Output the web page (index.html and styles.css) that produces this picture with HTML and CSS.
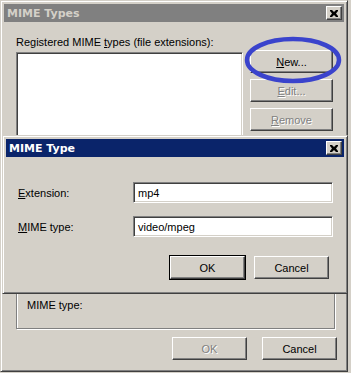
FILE: index.html
```html
<!DOCTYPE html>
<html lang="en">
<head>
    <meta charset="UTF-8">
    <title>MIME Types</title>
    <link rel="stylesheet" href="styles.css">
</head>
<body>
    <div class="window">
        <div class="titlebar inactive">
            <span class="title">MIME Types</span>
            <button class="close" aria-label="Close">
                <svg width="8" height="7" viewBox="0 0 8 7"><path d="M0 0h2l2 2 2-2h2v1L6 3.5 8 6v1H6L4 5 2 7H0V6l2-2.5L0 1z" fill="#000"/></svg>
            </button>
        </div>
        <div class="client">
            <div class="label">Registered MIME <u>t</u>ypes (file extensions):</div>
            <div class="list-row">
                <div class="listbox"></div>
                <div class="side-buttons">
                    <button class="btn"><u>N</u>ew...</button>
                    <button class="btn disabled"><u>E</u>dit...</button>
                    <button class="btn disabled"><u>R</u>emove</button>
                </div>
            </div>
            <div class="groupbox">
                <div class="group-label">MIME type:</div>
            </div>
            <div class="footer">
                <button class="btn wide disabled">OK</button>
                <button class="btn wide">Cancel</button>
            </div>
        </div>

        <!-- anotacao em volta do botao New -->
        <svg class="circle" width="100" height="50" viewBox="0 0 100 50">
            <ellipse cx="50" cy="24" rx="46" ry="21" fill="none" stroke="#3a43cc" stroke-width="4.5"/>
        </svg>
    </div>

    <div class="dialog">
        <div class="titlebar active">
            <span class="title">MIME Type</span>
            <button class="close" aria-label="Close">
                <svg width="8" height="7" viewBox="0 0 8 7"><path d="M0 0h2l2 2 2-2h2v1L6 3.5 8 6v1H6L4 5 2 7H0V6l2-2.5L0 1z" fill="#000"/></svg>
            </button>
        </div>
        <div class="dialog-client">
            <div class="field">
                <label class="field-label"><u>E</u>xtension:</label>
                <div class="textbox">mp4</div>
            </div>
            <div class="field">
                <label class="field-label"><u>M</u>IME type:</label>
                <div class="textbox">video/mpeg</div>
            </div>
            <div class="dialog-buttons">
                <button class="btn wide default">OK</button>
                <button class="btn wide">Cancel</button>
            </div>
        </div>
    </div>
</body>
</html>
```

FILE: styles.css
```css
body {
    margin: 0;
    background-color: #d4d0c8;
    font-family: "Liberation Sans", Arial, sans-serif;
    font-size: 11px;
    color: #000;
    position: relative;
    width: 351px;
    height: 373px;
    overflow: hidden;
}

u {
    text-decoration: underline;
    text-underline-offset: 1px;
}

/* janela principal */
.window {
    position: relative;
    width: 348px;
    height: 372px;
    box-sizing: border-box;
    border: 1px solid;
    border-color: #d4d0c8 #404040 #404040 #d4d0c8;
    box-shadow: inset 1px 1px #fff, inset -1px -1px #808080;
    padding: 3px;
    display: flex;
    flex-direction: column;
}

.titlebar {
    height: 18px;
    display: flex;
    align-items: center;
    justify-content: space-between;
    padding: 0 2px 0 3px;
    flex-shrink: 0;
}

.titlebar.inactive {
    background-color: #808080;
    color: #d4d0c8;
}

.titlebar.active {
    background-color: #0a246a;
    color: #fff;
}

.title {
    font-family: "DejaVu Sans", sans-serif;
    font-weight: bold;
    font-size: 11px;
}

.close {
    width: 16px;
    height: 14px;
    padding: 0;
    background-color: #d4d0c8;
    border: 1px solid;
    border-color: #fff #404040 #404040 #fff;
    box-shadow: inset -1px -1px #808080;
    display: flex;
    align-items: center;
    justify-content: center;
}

.client {
    flex: 1;
    display: flex;
    flex-direction: column;
    padding: 13px 7px 0 12px;
}

.label {
    line-height: 14px;
    height: 14px;
}

.list-row {
    display: flex;
    margin-top: 1px;
}

.listbox {
    width: 227px;
    height: 196px;
    margin-top: 2px;
    box-sizing: border-box;
    background-color: #fff;
    border: 1px solid;
    border-color: #808080 #fff #fff #808080;
    box-shadow: inset 1px 1px #404040, inset -1px -1px #d4d0c8;
}

.side-buttons {
    display: flex;
    flex-direction: column;
    gap: 6px;
    margin-left: 7px;
}

.btn {
    width: 83px;
    height: 23px;
    box-sizing: border-box;
    padding: 0;
    font-family: inherit;
    font-size: 11px;
    color: #000;
    background-color: #d4d0c8;
    border: 1px solid;
    border-color: #fff #404040 #404040 #fff;
    box-shadow: inset -1px -1px #808080;
}

.btn.wide {
    width: 75px;
}

.btn.disabled {
    color: #808080;
    text-shadow: 1px 1px #fff;
}

.btn.default {
    box-shadow: inset -1px -1px #808080, 0 0 0 1px #000;
}

.groupbox {
    width: 319px;
    height: 77px;
    margin-top: 4px;
    box-sizing: border-box;
    border: 1px solid #808080;
    box-shadow: inset 1px 1px #fff, 1px 1px #fff;
    display: flex;
    flex-direction: column;
    justify-content: flex-end;
    padding: 0 0 16px 10px;
}

.group-label {
    line-height: 14px;
}

.footer {
    display: flex;
    gap: 15px;
    justify-content: flex-end;
    margin-top: 8px;
}

.circle {
    position: absolute;
    left: 242px;
    top: 35px;
}

/* caixa de dialogo sobreposta */
.dialog {
    position: absolute;
    left: 2px;
    top: 135px;
    width: 346px;
    height: 159px;
    box-sizing: border-box;
    background-color: #d4d0c8;
    border: 1px solid;
    border-color: #d4d0c8 #404040 #404040 #d4d0c8;
    box-shadow: inset 1px 1px #fff, inset -1px -1px #808080;
    padding: 3px;
    display: flex;
    flex-direction: column;
}

.dialog-client {
    display: flex;
    flex-direction: column;
    padding: 25px 11px 0 12px;
}

.field {
    display: flex;
    align-items: center;
    height: 21px;
    margin-bottom: 13px;
}

.field-label {
    width: 115px;
    flex-shrink: 0;
}

.textbox {
    width: 200px;
    height: 21px;
    box-sizing: border-box;
    background-color: #fff;
    border: 1px solid;
    border-color: #808080 #fff #fff #808080;
    box-shadow: inset 1px 1px #404040, inset -1px -1px #d4d0c8;
    padding: 3px 4px;
    line-height: 14px;
}

.dialog-buttons {
    display: flex;
    justify-content: flex-end;
    gap: 9px;
    margin-top: 6px;
    padding-right: 4px;
}
```
